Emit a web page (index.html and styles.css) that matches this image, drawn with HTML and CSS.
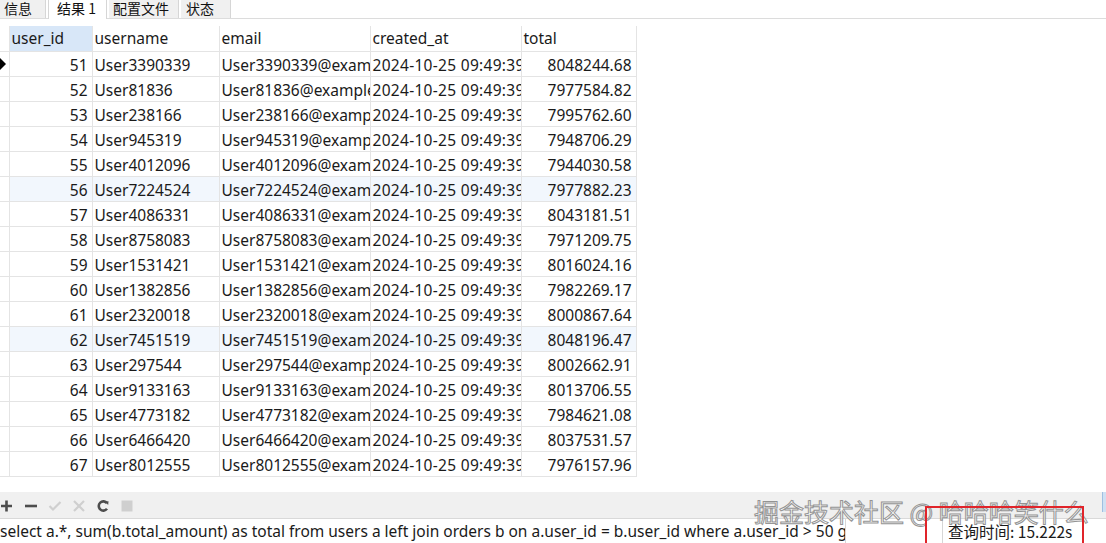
FILE: index.html
```html
<!DOCTYPE html>
<html lang="zh">
<head>
<meta charset="utf-8">
<link rel="stylesheet" href="styles.css">
</head>
<body>
<div class="app">
  <div class="tabs">
    <div class="tab">信息</div>
    <div class="tab active">结果 1</div>
    <div class="tab">配置文件</div>
    <div class="tab">状态</div>
  </div>
  <div class="grid-wrap">
    <table class="grid">
      <colgroup>
        <col class="c-ind"><col class="c-id"><col class="c-user"><col class="c-email"><col class="c-date"><col class="c-total">
      </colgroup>
      <thead>
        <tr><th class="ind"></th><th class="sel">user_id</th><th>username</th><th>email</th><th>created_at</th><th>total</th></tr>
      </thead>
      <tbody id="rows"></tbody>
    </table>
  </div>
  <div class="spacer"></div>
  <div class="toolbar">
    <svg class="ic" width="14" height="14" viewBox="0 0 14 14"><path d="M1 7H12M6.5 1.5V12.5" stroke="#4d4d4d" stroke-width="2.6"/></svg>
    <svg class="ic" width="14" height="14" viewBox="0 0 14 14"><path d="M1 7H13" stroke="#4d4d4d" stroke-width="2.6"/></svg>
    <svg class="ic" width="14" height="14" viewBox="0 0 14 14"><path d="M1.5 7L5 10.5L12.5 3" stroke="#cfcfcf" stroke-width="2.2" fill="none"/></svg>
    <svg class="ic" width="14" height="14" viewBox="0 0 14 14"><path d="M2 2L12 12M12 2L2 12" stroke="#cfcfcf" stroke-width="2.2"/></svg>
    <svg class="ic" width="14" height="14" viewBox="0 0 14 14"><path d="M11 4.2A4.6 4.6 0 1 0 11 9.8" stroke="#4d4d4d" stroke-width="2.6" fill="none"/><path d="M9 2.5L12.5 2.2L12.2 6" fill="#4d4d4d"/></svg>
    <svg class="ic" width="14" height="14" viewBox="0 0 14 14"><rect x="1.5" y="1.5" width="11" height="11" fill="#cfcfcf"/></svg>
  </div>
  <div class="status">
    <div class="sql">select a.*, sum(b.total_amount) as total from users a left join orders b on a.user_id = b.user_id where a.user_id &gt; 50 g</div>
    <div class="panel blank"></div>
    <div class="panel time">查询时间: 15.222s</div>
  </div>
  <div class="mark">掘金技术社区 @ 哈哈哈笑什么</div>
  <div class="redbox"></div>
  <div class="scrollnub"></div>
</div>
<script>
const data = [
[51,"User3390339","8048244.68"],[52,"User81836","7977584.82"],[53,"User238166","7995762.60"],
[54,"User945319","7948706.29"],[55,"User4012096","7944030.58"],[56,"User7224524","7977882.23"],
[57,"User4086331","8043181.51"],[58,"User8758083","7971209.75"],[59,"User1531421","8016024.16"],
[60,"User1382856","7982269.17"],[61,"User2320018","8000867.64"],[62,"User7451519","8048196.47"],
[63,"User297544","8002662.91"],[64,"User9133163","8013706.55"],[65,"User4773182","7984621.08"],
[66,"User6466420","8037531.57"],[67,"User8012555","7976157.96"]];
const tb = document.getElementById('rows');
let html = '';
data.forEach((r,i)=>{
  const tint = (r[0]===56||r[0]===62) ? ' class="tint"' : '';
  html += `<tr${tint}><td class="ind">${i===0?'<span class="arrow"></span>':''}</td><td class="num">${r[0]}</td><td>${r[1]}</td><td>${r[1]}@example.com</td><td class="date">2024-10-25 09:49:39</td><td class="num">${r[2]}</td></tr>`;
});
tb.innerHTML = html;
</script>
</body>
</html>
```
FILE: styles.css
```css
* { box-sizing: border-box; }
html, body { margin: 0; padding: 0; background: #fff; }
body {
  font-family: "Noto Sans", "Noto Sans CJK SC", sans-serif;
  font-size: 15.5px;
  color: #1a1a1a;
  width: 1106px;
  height: 543px;
  overflow: hidden;
}
.app {
  position: relative;
  display: flex;
  flex-direction: column;
  height: 543px;
}
.tabs {
  display: flex;
  height: 19px;
  border-bottom: 1px solid #dcdcdc;
  flex: none;
}
.tab {
  font-family: "Noto Sans CJK SC", sans-serif;
  font-size: 14px;
  line-height: 16px;
  padding: 0 5px;
  background: #f0f0f0;
  border-right: 1px solid #d6d6d6;
  color: #111;
  margin-right: 2px;
}
.tab:first-child { padding-left: 4px; width: 46px; }
.tab.active { background: #fff; width: 59px; padding-left: 8px; border-left: 1px solid #d6d6d6; height: 19px; }
.tab:nth-child(3) { width: 70px; padding-left: 4px; }
.tab:nth-child(4) { width: 50px; padding-left: 5px; }
.grid-wrap { padding-top: 7px; flex: none; }
.grid {
  border-collapse: collapse;
  table-layout: fixed;
  width: 636px;
}
.c-ind { width: 9px; }
.c-id { width: 83px; }
.c-user { width: 127px; }
.c-email { width: 151px; }
.c-date { width: 151px; }
.c-total { width: 115px; }
.grid th, .grid td {
  height: 25px;
  padding: 0 2px;
  border: 1px solid #e4e4e4;
  white-space: nowrap;
  overflow: hidden;
  text-overflow: clip;
  font-weight: normal;
  text-align: left;
  line-height: 23px;
}
.grid td { line-height: 22px; padding-top: 2px; padding-bottom: 0; }
.grid td.date { letter-spacing: 0.3px; }
.grid th { border-top: none; }
.grid th.sel { background: #d8e7f8; }
.grid td.num { text-align: right; padding-right: 4px; }
.grid .ind { padding: 0; border-left: none; position: relative; }
.grid tr.tint td { background: #f2f7fd; }
.grid tr.tint td.ind { background: #fff; }
.arrow {
  position: absolute;
  left: 0; top: 6px;
  width: 0; height: 0;
  border-top: 6px solid transparent;
  border-bottom: 6px solid transparent;
  border-left: 6px solid #000;
}
.spacer { flex: 1; }
.toolbar {
  flex: none;
  height: 27px;
  background: #f0f0f0;
  border-bottom: 1px solid #d9d9d9;
  display: flex;
  align-items: center;
  gap: 10px;
  padding-left: 0;
  padding-top: 2px;
}
.ic { display: block; }
.status {
  flex: none;
  height: 24px;
  display: flex;
  background: #fff;
  line-height: 24px;
}
.sql {
  width: 846px;
  white-space: nowrap;
  overflow: hidden;
  border-right: 1px solid #d6d6d6;
  padding-left: 0;
}
.panel.blank { width: 97px; border-right: 1px solid #d6d6d6; }
.panel.time {
  font-family: "Noto Sans CJK SC", sans-serif;
  font-size: 15.5px;
  padding-left: 5px;
  white-space: nowrap;
}
.mark {
  position: absolute;
  left: 754px;
  top: 494px;
  font-family: "Noto Sans CJK SC", sans-serif;
  font-size: 25px;
  line-height: 34px;
  color: #fff;
  letter-spacing: 0;
  white-space: nowrap;
  -webkit-text-stroke: 1px #8a8a8a;
  opacity: 0.9;
}
.redbox {
  position: absolute;
  left: 925px;
  top: 506px;
  width: 159px;
  height: 50px;
  border: 2px solid #e0242a;
}
.scrollnub {
  position: absolute;
  left: 1102px;
  top: 492px;
  width: 4px;
  height: 20px;
  background: #cfe0f3;
  border-left: 1px solid #9fbfe0;
}
```
